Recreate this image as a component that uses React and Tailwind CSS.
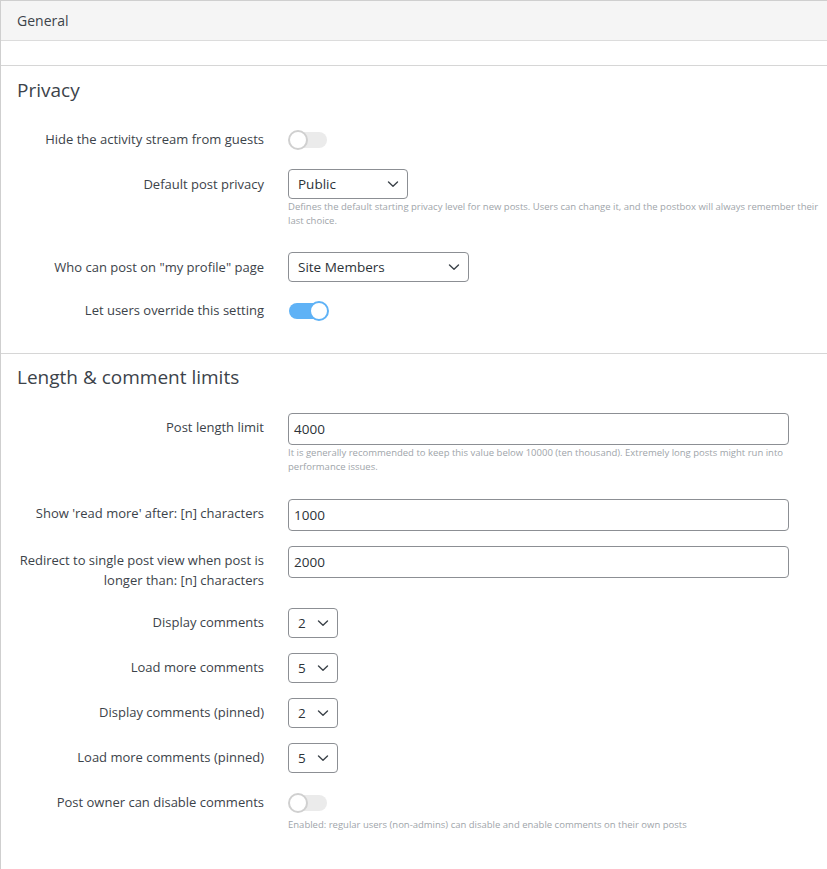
import React from 'react';

// chevron used inside the native-looking selects
function Chevron() {
  return (
    <svg width="12" height="12" viewBox="0 0 12 12" fill="none" className="shrink-0">
      <path d="M1.5 4l4.5 4.2 4.5-4.2" stroke="#3c434a" strokeWidth="1.4" strokeLinecap="round" strokeLinejoin="round" />
    </svg>
  );
}

function Toggle({ on }) {
  return (
    <div className="relative w-[42px] h-[22px] shrink-0">
      <div
        className={`absolute left-[1px] top-[3px] w-[38px] h-[16px] rounded-full ${on ? 'bg-[#5fb2f6]' : 'bg-[#ebebeb]'}`}
      />
      <div
        className={`absolute top-[1px] w-[20px] h-[20px] rounded-full bg-white border-2 ${on ? 'left-[21px] border-[#5fb2f6]' : 'left-0 border-[#d0d0d0]'}`}
      />
    </div>
  );
}

function Select({ value, width }) {
  return (
    <div
      className="h-[30px] flex items-center justify-between border border-[#8c8f94] rounded-[4px] bg-white pl-[9px] pr-[8px] text-[13.5px] text-[#2c3338]"
      style={{ width }}
    >
      <span>{value}</span>
      <Chevron />
    </div>
  );
}

function Input({ value }) {
  return (
    <div className="h-[32px] w-[501px] flex items-center border border-[#8c8f94] rounded-[4px] bg-white px-[5px] text-[13.5px] text-[#2c3338]">
      {value}
    </div>
  );
}

function Help({ children }) {
  return (
    <p className="mt-[1px] text-[9.5px] leading-[14px] text-[#a0a5aa] max-w-[537px]">{children}</p>
  );
}

function Row({ label, children, className = "", labelPad = "pt-[5px]" }) {
  return (
    <div className={`flex items-start ${className}`}>
      <div className={`w-[263px] shrink-0 pl-3 text-right text-[13px] leading-[20px] text-[#3c434a] ${labelPad}`}>
        {label}
      </div>
      <div className="ml-6 flex flex-col">{children}</div>
    </div>
  );
}

export default function App() {
  return (
    <div className="w-[827px] min-h-[869px] bg-white border-l border-t border-[#cfcfcf]" style={{ fontFamily: '"Open Sans", "Liberation Sans", sans-serif' }}>
      {/* Header */}
      <div className="h-[40px] flex items-center px-4 bg-[#f5f5f5] border-b border-[#dcdcdc] text-[14px] text-[#3c434a]">
        General
      </div>
      <div className="h-[25px] border-b border-[#d6d6d6]" />

      {/* Privacy */}
      <div className="pb-[31px] border-b border-[#d6d6d6]">
        <h2 className="pt-[12px] px-4 text-[19px] leading-[24px] text-[#3c434a]">Privacy</h2>

        <Row label="Hide the activity stream from guests" className="mt-[26px]" labelPad="pt-[1px]">
          <div className="pt-[1px]"><Toggle on={false} /></div>
        </Row>

        <Row label="Default post privacy" className="mt-[18px]">
          <Select value="Public" width={120} />
          <Help>
            Defines the default starting privacy level for new posts. Users can change it, and the postbox will always remember their last choice.
          </Help>
        </Row>

        <Row label={'Who can post on "my profile" page'} className="mt-[24px]">
          <Select value="Site Members" width={181} />
        </Row>

        <Row label="Let users override this setting" className="mt-[17px]" labelPad="pt-[1px]">
          <div className="pt-[1px]"><Toggle on={true} /></div>
        </Row>
      </div>

      {/* Length & comment limits */}
      <div className="pb-[40px]">
        <h2 className="pt-[11px] px-4 text-[19px] leading-[24px] text-[#3c434a]">Length &amp; comment limits</h2>

        <Row label="Post length limit" className="mt-[24px]" labelPad="pt-[4px]">
          <Input value="4000" />
          <Help>
            It is generally recommended to keep this value below 10000 (ten thousand). Extremely long posts might run into performance issues.
          </Help>
        </Row>

        <Row label="Show 'read more' after: [n] characters" className="mt-[25px]" labelPad="pt-[4px]">
          <Input value="1000" />
        </Row>

        <Row label="Redirect to single post view when post is longer than: [n] characters" className="mt-[15px]" labelPad="pt-[4px]">
          <Input value="2000" />
        </Row>

        <Row label="Display comments" className="mt-[18px]" labelPad="pt-[4px]">
          <Select value="2" width={50} />
        </Row>
        <Row label="Load more comments" className="mt-[15px]" labelPad="pt-[4px]">
          <Select value="5" width={50} />
        </Row>
        <Row label="Display comments (pinned)" className="mt-[15px]" labelPad="pt-[4px]">
          <Select value="2" width={50} />
        </Row>
        <Row label="Load more comments (pinned)" className="mt-[15px]" labelPad="pt-[4px]">
          <Select value="5" width={50} />
        </Row>

        <Row label="Post owner can disable comments" className="mt-[19px]" labelPad="pt-[0px]">
          <Toggle on={false} />
          <p className="mt-[4px] text-[9.5px] leading-[14px] text-[#a0a5aa]">
            Enabled: regular users (non-admins) can disable and enable comments on their own posts
          </p>
        </Row>
      </div>
    </div>
  );
}
